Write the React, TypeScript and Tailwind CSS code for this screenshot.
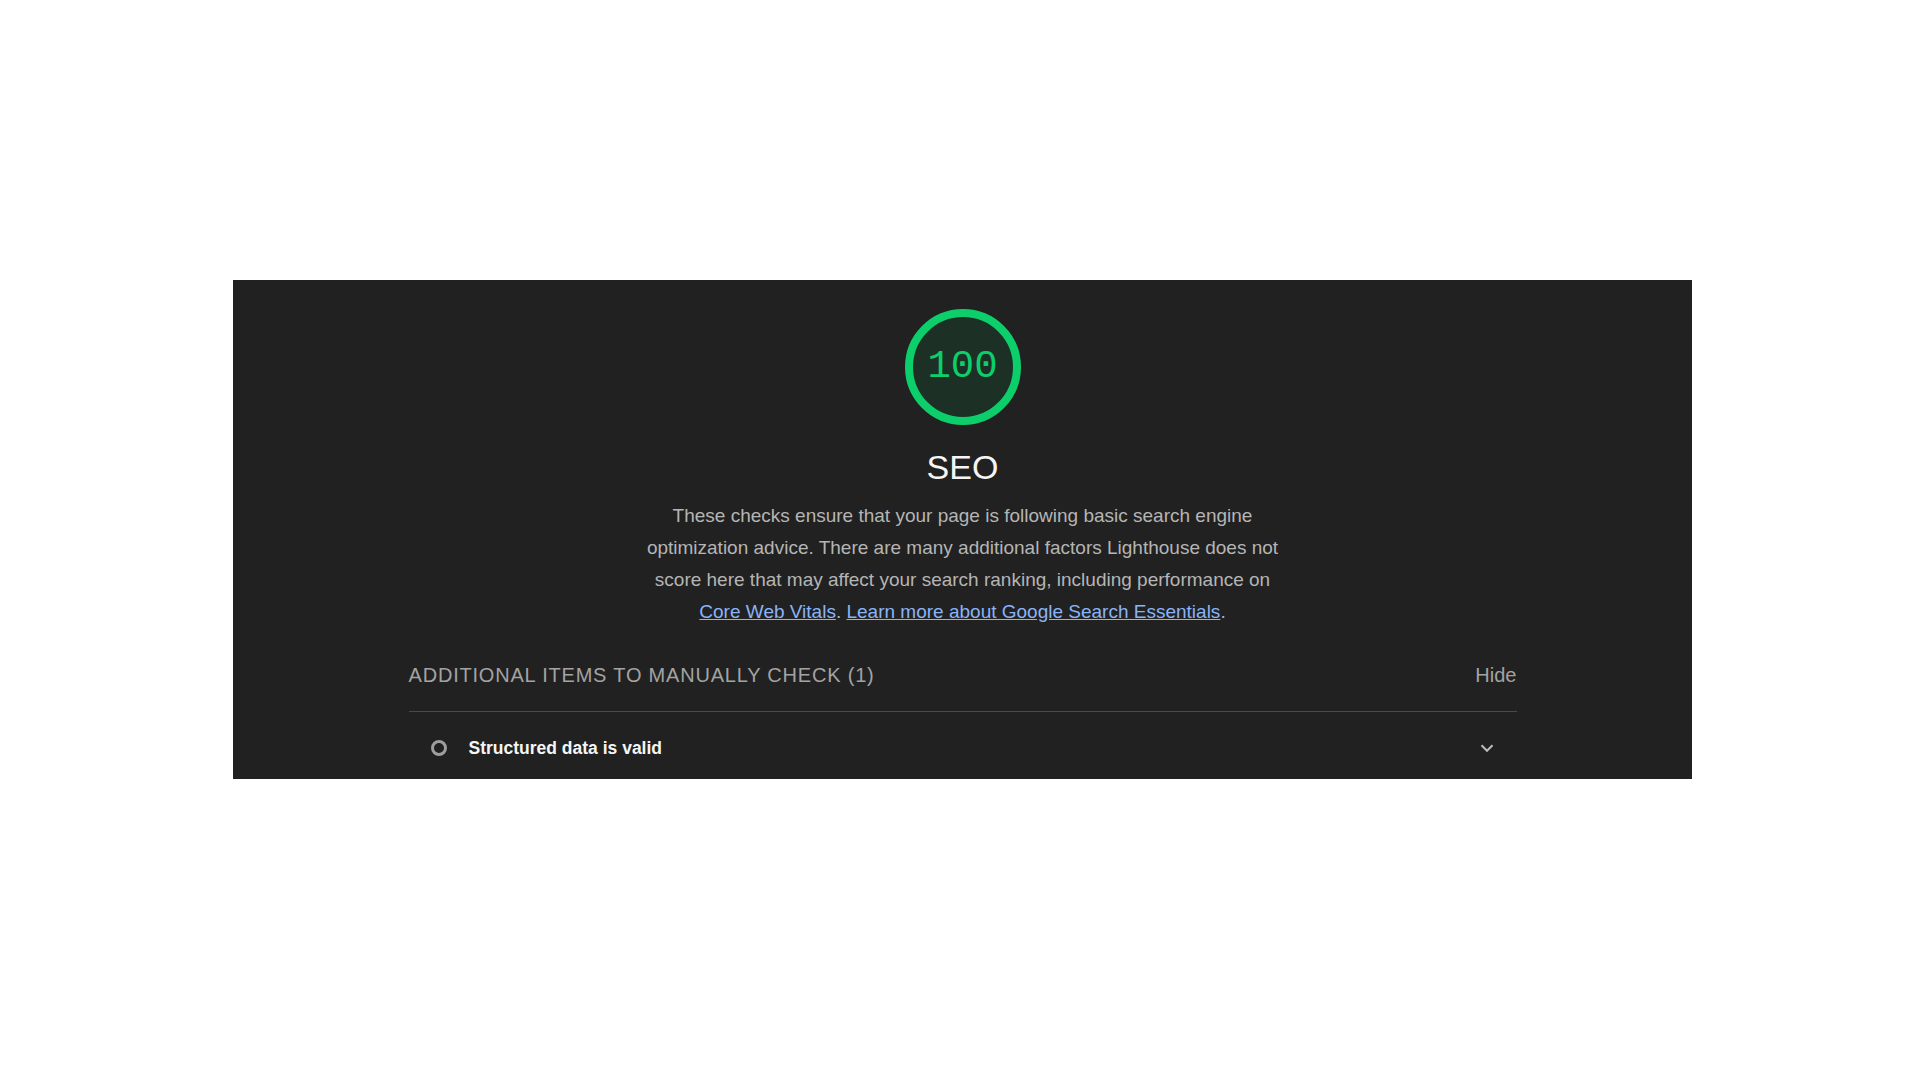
import React from 'react';

const sans = { fontFamily: '"Liberation Sans", Arial, sans-serif' };

const ScoreGauge: React.FC<{ score: number }> = ({ score }) => (
  <div className="relative w-[116px] h-[116px]">
    <svg className="absolute inset-0" viewBox="0 0 116 116" width="116" height="116">
      <circle cx="58" cy="58" r="54" fill="#1d3026" stroke="#0cce6b" strokeWidth="8" />
    </svg>
    <div className="absolute inset-0 flex items-center justify-center font-['Liberation_Mono',monospace] text-[39px] text-[#0cce6b]">
      {score}
    </div>
  </div>
);

export default function App() {
  return (
    <div className="min-h-screen bg-white pt-[280px]" style={sans}>
      <div className="mx-[233px] w-[1459px] h-[499px] overflow-hidden bg-[#212121]">
        <div className="flex flex-col items-center pt-[29px]">
          <ScoreGauge score={100} />
          <h1 className="mt-[22px] text-[34px] leading-[40px] text-[#f5f5f5]">SEO</h1>
          <p className="mt-[13px] w-[660px] text-center text-[19px] leading-[32px] text-[#b5b5b5]">
            These checks ensure that your page is following basic search engine optimization advice. There are many
            additional factors Lighthouse does not score here that may affect your search ranking, including performance
            on{' '}
            <a className="text-[#8ab4f8] underline" href="#">Core Web Vitals</a>.{' '}
            <a className="text-[#8ab4f8] underline" href="#">Learn more about Google Search Essentials</a>.
          </p>
        </div>

        {/* manual checks group */}
        <div className="mx-auto mt-[34px] w-[1108px]">
          <div className="flex items-center justify-between pb-[23px] border-b border-[#4a4a4a]">
            <span className="text-[20px] leading-[26px] tracking-[0.04em] uppercase text-[#a3a3a3]">
              Additional items to manually check (1)
            </span>
            <span className="text-[20px] leading-[26px] text-[#a3a3a3]">Hide</span>
          </div>
          <div className="flex items-center h-[72px] pl-[22px] pr-[19px]">
            <span className="w-[16px] h-[16px] rounded-full border-[3px] border-[#9e9e9e]" />
            <span className="ml-[22px] text-[17.5px] font-bold text-[#f5f5f5]">Structured data is valid</span>
            <svg className="ml-auto" width="22" height="22" viewBox="0 0 24 24" fill="none" stroke="#bdbdbd" strokeWidth="2.2">
              <path d="M6 9l6 6 6-6" />
            </svg>
          </div>
        </div>
      </div>
    </div>
  );
}
